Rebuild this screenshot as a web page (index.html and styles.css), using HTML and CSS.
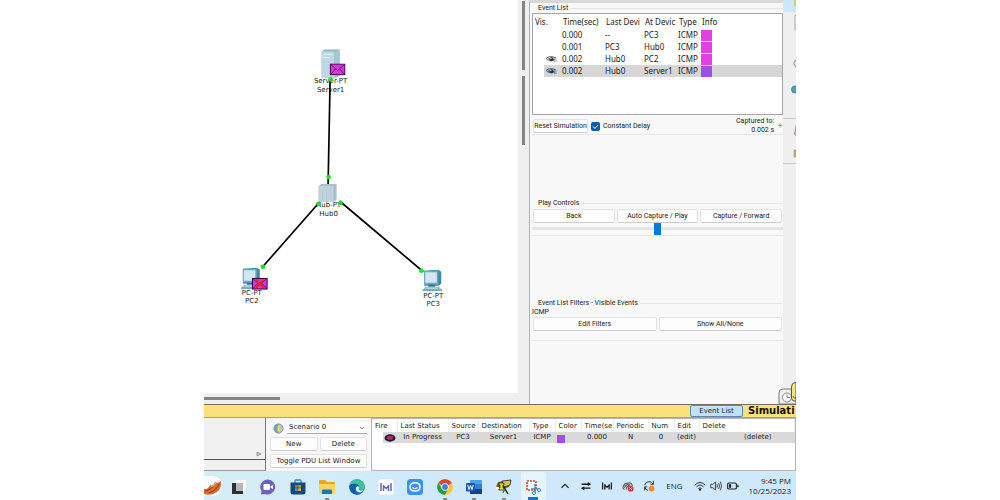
FILE: index.html
```html
<!DOCTYPE html>
<html lang="en">
<head>
<meta charset="utf-8">
<title>Packet Tracer - Simulation</title>
<link rel="stylesheet" href="styles.css">
</head>
<body>
<svg class="defs" aria-hidden="true">
  <defs>
    <symbol id="eye" viewBox="0 0 12 8">
      <path d="M1 3.5Q5 0 11 3" fill="none" stroke="#555" stroke-width="1"/>
      <path d="M1 4.5Q5 1 11 5Q6 8 1 4.5Z" fill="currentColor"/>
      <circle cx="6.5" cy="4.2" r="2" fill="#333"/><circle cx="5.8" cy="3.6" r=".7" fill="#eee"/>
      <path d="M9.500 3V7M11 3.500V7" stroke="currentColor" stroke-width=".8"/>
    </symbol>
    <symbol id="pc" viewBox="0 0 20 21">
      <path d="M2 1L16 0L19 2V14L16 16H2Z" fill="#3d8ba3"/>
      <path d="M2 1H16V15H2Z" fill="#6aa9bd"/>
      <path d="M3 2.500H14.500V13H3Z" fill="#d3e7f3"/>
      <path d="M6 15H13V17H6Z" fill="#2f6f86"/>
      <path d="M3 17H17L20 21H0Z" fill="#8fc0cf"/><path d="M0 20.5H20" stroke="#3b7c93" stroke-width="1"/>
      <path d="M4 18.5H15" stroke="#d9edf3" stroke-width=".7"/>
    </symbol>
    <symbol id="mail" viewBox="0 0 16 12">
      <path d="M.6 .6H15.4V11.4H.6Z" fill="#d936da" stroke="#330044" stroke-width="1.1"/>
      <path d="M1 1L8 7L15 1M1 11L6 5.5M15 11L10 5.5" fill="none" stroke="#4d0a5a" stroke-width=".8"/>
    </symbol>
    <symbol id="bars" viewBox="0 0 16 16">
      <path d="M3 4V12M13 4V12M5.5 6V12M10.500 6V12M5.500 7L8 9.500L10.500 7" fill="none" stroke="currentColor" stroke-width="1.5"/>
    </symbol>
  </defs>
</svg>
<main class="screen">
  <div class="workspace">
    <section class="stage">
      <svg class="topology" viewBox="0 0 315 393" role="img" aria-label="Network topology">
        <g class="device">
          <path d="M118 51L121 49H136V75L133 77H118Z" fill="#8fb6c4"/>
          <path d="M118 51H131V77H118Z" fill="#bcd9e3"/><path d="M131 51L136 49V75L131 77Z" fill="#a2c6d3"/>
          <path d="M120 54H129M120 57H126" stroke="#e6f4f9"/>
          <use href="#mail" x="126" y="63" width="16" height="12"/>
          <text x="127" y="83">Server-PT</text><text x="127" y="92">Server1</text>
        </g>
        <g class="device">
          <path d="M115 186L118 184H133V200L130 202H115Z" fill="#a5bfca"/><path d="M115 186H130V202H115Z" fill="#c0d3dc"/>
          <path d="M119 187V201M123 187V201M127 187V201" stroke="#b1c8d2" stroke-width=".7"/>
          <text x="125" y="207">Hub-PT</text><text x="125" y="216">Hub0</text>
        </g>
        <g class="device">
          <use href="#pc" x="37" y="268" width="20" height="21"/>
          <use href="#mail" x="48" y="278" width="16" height="12"/>
          <path d="M52 280L60 288M60 280L52 288" stroke="#f02020" stroke-width="2"/>
          <text x="48" y="295">PC-PT</text><text x="48" y="303">PC2</text>
        </g>
        <g class="device">
          <use href="#pc" x="219" y="270" width="20" height="21"/>
          <text x="230" y="298">PC-PT</text><text x="230" y="306">PC3</text>
        </g>
        <path class="link" d="M126.500 80L124.500 184M116 202L58 268M136 201L220 272"/>
        <g class="port"><circle cx="127" cy="79" r="2.300"/><circle cx="125" cy="177" r="2.300"/><circle cx="115" cy="204" r="2.300"/><circle cx="137" cy="203" r="2.300"/><circle cx="59" cy="267" r="2.300"/><circle cx="218" cy="271" r="2.300"/></g>
      </svg>
      <div class="vscroll"><span></span><span></span></div>
      <div class="hscroll"><span></span></div>
    </section>

    <aside class="panel">
      <section class="group events">
        <h2>Event List</h2>
        <div class="listbox">
          <table class="eventtable">
            <colgroup><col class="c-vis"><col class="c-time"><col class="c-last"><col class="c-at"><col class="c-type"><col></colgroup>
            <thead><tr><th>Vis.</th><th>Time(sec)</th><th>Last Devi</th><th>At Devic</th><th>Type</th><th>Info</th></tr></thead>
            <tbody>
              <tr><td></td><td>0.000</td><td>--</td><td>PC3</td><td>ICMP</td><td><i class="swatch"></i></td></tr>
              <tr><td></td><td>0.001</td><td>PC3</td><td>Hub0</td><td>ICMP</td><td><i class="swatch"></i></td></tr>
              <tr><td><svg class="eye"><use href="#eye"/></svg></td><td>0.002</td><td>Hub0</td><td>PC2</td><td>ICMP</td><td><i class="swatch"></i></td></tr>
              <tr class="selected"><td><svg class="eye blue"><use href="#eye"/></svg></td><td>0.002</td><td>Hub0</td><td>Server1</td><td>ICMP</td><td><i class="swatch violet"></i></td></tr>
            </tbody>
          </table>
        </div>
        <div class="capture">
          <button>Reset Simulation</button>
          <label><input type="checkbox" checked>Constant Delay</label>
          <p>Captured to:<br>0.002 s</p><span class="star">✳</span>
        </div>
      </section>
      <section class="group play">
        <h2>Play Controls</h2>
        <div class="buttons"><button>Back</button><button>Auto Capture / Play</button><button>Capture / Forward</button></div>
        <input class="speed" type="range" aria-label="Play speed" value="50">
      </section>
      <section class="group filters">
        <h2>Event List Filters - Visible Events</h2>
        <p>ICMP</p>
        <div class="buttons"><button>Edit Filters</button><button>Show All/None</button></div>
      </section>
    </aside>

    <nav class="rail">
      <svg viewBox="0 0 13 200" aria-hidden="true">
        <path d="M0 0H13V12H0Z" fill="#cce8ff"/><path d="M11 0H13V6H11Z" fill="#c2d66b"/>
        <path d="M13 15H12V30H13" fill="none" stroke="#aaa"/>
        <path d="M13 60Q9 63 13 67" fill="none" stroke="#999" stroke-width="1.200"/>
        <ellipse cx="12" cy="89.500" rx="3.500" ry="3.500" fill="#45a9ad" stroke="#27777b" stroke-width=".7"/>
        <path d="M0 118.500H13M0 163.500H13" stroke="#c8c8c8"/>
        <path d="M13 125L12 131L11 134L13 136M11 150H13V157H11Z" fill="#c9b184" stroke="#a58c5c" stroke-width=".6"/>
      </svg>
    </nav>
    <button class="modetab" aria-label="Simulation mode">
      <svg viewBox="0 0 18 22"><path d="M1 22V11Q1 7 5 7H18V22Z" fill="#f0f0f0" stroke="#777"/><circle cx="9" cy="15.500" r="4.500" fill="#fafafa" stroke="#888"/><path d="M9 12.500V15.500H12" fill="none" stroke="#888"/><path d="M13.500 16V5Q13.500 1 17 .5H18V19H16Q14 19 13.500 16Z" fill="#f8e27a" stroke="#555"/><path d="M15 14Q16 17 18 16" fill="none" stroke="#555"/></svg>
    </button>
  </div>

  <div class="modebar"><button>Event List</button><strong>Simulati</strong></div>

  <div class="pdus">
    <div class="tray-left"><div><svg viewBox="0 0 6 6"><path d="M1 1L5 3L1 5Z" fill="#ccc" stroke="#888" stroke-width=".8"/></svg></div><div></div></div>
    <div class="scenario">
      <div class="pick">
        <svg viewBox="0 0 12 12"><circle cx="6" cy="6" r="5" fill="#b9c4c8" stroke="#7f8d92"/><path d="M6 1A5 5 0 0 0 6 11Z" fill="#7b9fb4"/><path d="M5 3H7V4.200H5ZM5 5H7V9H5Z" fill="#f7ef65"/></svg>
        <select aria-label="Scenario"><option>Scenario 0</option></select>
      </div>
      <div class="buttons"><button>New</button><button>Delete</button></div>
      <button>Toggle PDU List Window</button>
    </div>
    <div class="pdubox">
      <table class="pdutable">
        <colgroup><col class="w25"><col class="w51"><col class="w30"><col class="w51"><col class="w26"><col class="w26"><col class="w32"><col class="w35"><col class="w26"><col class="w25"><col></colgroup>
        <thead><tr><th>Fire</th><th>Last Status</th><th>Source</th><th>Destination</th><th>Type</th><th>Color</th><th>Time(se</th><th>Periodic</th><th>Num</th><th>Edit</th><th>Delete</th></tr></thead>
        <tbody><tr><td><svg class="fire" viewBox="0 0 12 8"><ellipse cx="6" cy="4" rx="5.500" ry="3.700" fill="#1b1b35"/><ellipse cx="6" cy="3.800" rx="3.300" ry="2" fill="#b02a62"/></svg></td><td>In Progress</td><td>PC3</td><td>Server1</td><td>ICMP</td><td><i class="swatch violet small"></i></td><td>0.000</td><td>N</td><td>0</td><td>(edit)</td><td>(delete)</td></tr></tbody>
      </table>
    </div>
  </div>

  <footer class="taskbar">
    <svg class="canyon" viewBox="0 0 18 20"><path d="M0 0H10Q18 2 18 10Q18 19 9 20H0Z" fill="#f6fbfe"/><path d="M0 13Q4 14 6 9Q9 11 11 6Q14 8 17 5Q18 12 13 16Q7 20 0 18Z" fill="#dc6a2f"/><path d="M1 15Q7 14 9 10M5 17Q12 15 15 8" fill="none" stroke="#8d3518"/><path d="M7 11Q10 10 12 7" stroke="#f5ab72" fill="none"/></svg>
    <div class="apps">
      <span><svg viewBox="0 0 16 16"><path d="M5 1H15V12H5Z" fill="#f8f8f8"/><path d="M1 4H12V15H1Z" fill="#303030"/><path d="M5 4H12V12H5Z" fill="#b6b9bb"/></svg></span>
      <span><svg viewBox="0 0 16 16"><path d="M8 .5A7.500 7.500 0 1 1 5 15L1 15.500L1.500 12A7.500 7.500 0 0 1 8 .5Z" fill="#6c5fc0"/><rect x="3.500" y="5" width="6.500" height="6" rx="1.300" fill="#fff"/><path d="M10.500 7.500L13 5.800V10.200L10.500 8.600Z" fill="#fff"/></svg></span>
      <span><svg viewBox="0 0 16 16"><path d="M5 4V2Q5 1 6 1H10Q11 1 11 2V4" fill="none" stroke="#2b8bd0" stroke-width="1.300"/><path d="M.5 3.500H15.500V13Q15.500 15.500 13 15.500H3Q.5 15.500 .5 13Z" fill="#17477e"/><path d="M5 6H7.700V8.700H5Z" fill="#f05a30"/><path d="M8.300 6H11V8.700H8.300Z" fill="#7fba25"/><path d="M5 9.300H7.700V12H5Z" fill="#28a8ea"/><path d="M8.300 9.300H11V12H8.300Z" fill="#fdb813"/></svg></span>
      <span class="open"><svg viewBox="0 0 16 16"><path d="M0 2Q0 1 1 1H6L8 3H15Q16 3 16 4V14H0Z" fill="#e9a820"/><path d="M0 5H16V14Q16 15 15 15H1Q0 15 0 14Z" fill="#fcd462"/><path d="M3 15V11.500Q3 10.500 4 10.500H12Q13 10.500 13 11.500V15Z" fill="#1e75bd"/></svg></span>
      <span><svg viewBox="0 0 16 16"><circle cx="8" cy="8" r="7.800" fill="#1b78c8"/><path d="M1 5A7.800 7.800 0 0 1 15.800 8Q15.500 11 12 11Q9.500 11 10 9Q10 5.500 6 5Q3 4.500 .5 7Z" fill="#37c5a0"/><path d="M.3 8Q1 4.500 5.500 4.800Q10 5 10 8.500Q6 7 6 10.500Q6.500 14.500 11 15A7.800 7.800 0 0 1 .3 8Z" fill="#145da8"/><path d="M7 8Q9.500 6.500 10 8.500Q9 11 12 11.500Q14 11.500 15 10.500Q13 14 9.500 13Q6 11.500 7 8Z" fill="#dff3f8"/></svg></span>
      <span><svg class="indigo" viewBox="0 0 16 16"><rect x=".5" y=".5" width="15" height="15" rx="2" fill="#fff"/><use href="#bars" width="16" height="16"/></svg></span>
      <span><svg viewBox="0 0 16 16"><rect width="16" height="16" rx="3.500" fill="#3990f5"/><path d="M8 3.800C12 3.800 13 6 13 8S11.500 12 8 12S3 10 3 8S4 3.800 8 3.800Z" fill="none" stroke="#fff" stroke-width="1.500"/><path d="M5.500 8.500Q8 10.500 10.500 8.500" fill="none" stroke="#fff" stroke-width="1.200"/></svg></span>
      <span class="open"><svg viewBox="0 0 16 16"><circle cx="8" cy="8" r="7.800" fill="#fac72e"/><path d="M8 8L1.250 4.100A7.800 7.800 0 0 1 14.750 4.100Z" fill="#df4132"/><path d="M1.250 4.100A7.800 7.800 0 0 0 8 15.800L11.200 9.500L5 9.500Z" fill="#269b4c"/><circle cx="8" cy="8" r="3.700" fill="#fff"/><circle cx="8" cy="8" r="2.900" fill="#3e7fe8"/></svg></span>
      <span class="open"><svg viewBox="0 0 16 16"><rect x="4" y="1" width="12" height="14" rx="1" fill="#2d83d3"/><path d="M4 1H15Q16 1 16 2V5H4Z" fill="#45a5ed"/><path d="M4 10H16V14Q16 15 15 15H4Z" fill="#173f86"/><rect y="4" width="9" height="8.500" rx="1" fill="#1d59ae"/><path d="M1.700 6L3 10.500L4.500 6.500L6 10.500L7.300 6" fill="none" stroke="#fff" stroke-width="1"/></svg></span>
      <span class="open"><svg viewBox="0 0 16 16"><path d="M2 3L15 1L13 8L4 11L0 8Z" fill="#746124"/><path d="M6 2L15 1L14 6L8 8Z" fill="#d6c63d" stroke="#222" stroke-width=".8"/><path d="M3 4H8V6H7V9H8V11H3V9H4V6H3Z" fill="#eee32e" stroke="#171717" stroke-width=".7"/><path d="M8 8L12 15" stroke="#1c2318" stroke-width="1.500"/><path d="M9 10L7 14" stroke="#4c7a3a" stroke-width="1.200"/><path d="M0 8H3V10H0Z" fill="#fff"/></svg></span>
      <span class="active"><svg viewBox="0 0 16 16"><path d="M2 2H11V11H2Z" fill="#faf4f4" stroke="#d2452f" stroke-width="1.600" stroke-dasharray="2 1"/><path d="M10 5V13M6 10H13" stroke="#3f91bd" stroke-width="1.400"/><circle cx="9" cy="14" r="1.500" fill="none" stroke="#2d86c2"/><circle cx="14" cy="11" r="1.500" fill="none" stroke="#2d86c2"/></svg></span>
    </div>
    <div class="tray">
      <svg viewBox="0 0 16 16"><path d="M4 10L8 6L12 10" fill="none" stroke="#222" stroke-width="1.300"/></svg>
      <svg viewBox="0 0 16 16"><path d="M3 6H13M3 10.500H13" stroke="#111" stroke-width="1.500"/><path d="M10 3.500L13.500 6L10 8ZM6 8.500L2.500 10.500L6 13Z" fill="#111"/></svg>
      <svg viewBox="0 0 16 16"><use href="#bars" width="16" height="16"/></svg>
      <svg viewBox="0 0 16 16"><path d="M4 12Q1 11 3 8Q4 4 8 5Q12 3 13 8M4 10Q6 5 11 7M6 12Q6 8 10 8" fill="none" stroke="#555" stroke-width="1.200"/><circle cx="11" cy="11" r="3.300" fill="#d6303a"/><path d="M9.700 9.700L12.300 12.300M12.300 9.700L9.700 12.300" stroke="#fff" stroke-width=".9"/></svg>
      <svg viewBox="0 0 16 16"><path d="M3 7Q4 3 8 3Q11 3 13 6M13 2V6H9.500M3 9Q4 13 7 13M3 13V9H6" fill="none" stroke="#333" stroke-width="1.100"/><circle cx="11" cy="11" r="3.200" fill="#f18a1f"/></svg>
      <span class="lang">ENG</span>
      <svg viewBox="0 0 16 16"><path d="M2 7Q8 1 14 7M4 9Q8 5 12 9M6 11Q8 9 10 11" fill="none" stroke="#222" stroke-width="1.100"/><circle cx="8" cy="12.300" r="1.100"/></svg>
      <svg viewBox="0 0 16 16"><path d="M2 6H4.500L7.500 3.500V12.500L4.500 10H2ZM9 6Q10.500 8 9 10M11 4.500Q13 8 11 11.500M13 3Q15.500 8 13 13" fill="none" stroke="#333" stroke-width="1"/></svg>
      <svg viewBox="0 0 16 16"><rect x="3" y="4.500" width="10" height="7" rx="1.500" fill="none" stroke="#222" stroke-width="1.200"/><path d="M4.500 6H7V10H4.500ZM14 6.500H15.500V9.500H14Z" fill="#222"/></svg>
      <p>9:45 PM<br>10/25/2023</p>
    </div>
  </footer>
</main>
</body>
</html>
```
FILE: styles.css
```css
* { box-sizing: border-box; }
body { margin: 0; background: #fff; color: #222; font: 7px/9px "DejaVu Sans", sans-serif; }
h2, p { margin: 0; font-size: inherit; font-weight: normal; }
button { margin: 0; padding: 0 2px; border: 1px solid #e2e2e2; border-bottom-color: #ccc; border-radius: 2px; background: #fdfdfd; color: inherit; font: inherit; white-space: nowrap; }
table { width: 100%; border-collapse: collapse; table-layout: fixed; }
th, td { padding: 0; font-weight: normal; text-align: left; white-space: nowrap; overflow: hidden; }
.defs { display: block; width: 0; height: 0; }

.screen { display: flex; flex-direction: column; min-height: 100vh; margin: 0 204px; background: #f0f0f0; overflow: hidden; }
.workspace { position: relative; flex: 1; display: grid; grid-template-columns: 1fr 254px 13px; }
.stage { display: grid; grid-template-columns: 1fr 11px; grid-template-rows: 1fr 11px; background: #efefef; }
.topology { display: block; width: 100%; height: 100%; background: #fff; }
.device text { text-anchor: middle; fill: #222; }
.link { fill: none; stroke: #000; stroke-width: 1.7; }
.port { fill: #16e424; }
.vscroll { display: flex; flex-direction: column; align-items: center; gap: 6px; padding-top: 1px; }
.vscroll span { width: 3px; height: 69px; background: #858585; }
.hscroll { padding-top: 4px; }
.hscroll span { display: block; width: 76px; height: 3px; background: #858585; }

.panel { display: flex; flex-direction: column; padding: 1px 0 0 2px; border-left: 1px solid #aab0b8; border-top: 3px solid #d8d8d8; background: #f8f8f8; font: 7px/9px Roboto, sans-serif; }
.group { border-bottom: 1px solid #e7e7e7; }
.group h2 { display: flex; align-items: center; gap: 2px; padding-left: 6px; }
.group h2::after { content: ""; flex: 1; height: 1px; background: #e5e5e5; }
.listbox { height: 102px; border: 1px solid #a5a5a5; background: #fff; }
.eventtable { font: 8px/12px "Noto Sans", sans-serif; }
.eventtable th { height: 15px; padding: 0 0 0 2px; }
.eventtable th:nth-child(n+2) { padding-left: 1px; }
.c-vis { width: 29px; }
.c-time { width: 43px; }
.c-last { width: 39px; }
.c-at { width: 34px; }
.c-type { width: 23px; }
.selected { background: linear-gradient(to right, transparent 11px, #d6d6d6 11px); }
.swatch { display: block; width: 11px; height: 11px; background: #e23fe4; }
.swatch.violet { background: #9e50e0; }
.swatch.small { width: 8px; height: 8px; margin: 2px 0 0 2px; }
.eye { display: block; width: 12px; height: 8px; margin-left: 12px; color: #999; }
.eye.blue { color: #3f8cc0; }
.capture { display: flex; align-items: center; gap: 3px; height: 19px; padding-top: 3px; }
.capture button { width: 55px; height: 14px; margin-left: 1px; padding: 0; }
.capture label { display: flex; align-items: center; gap: 3px; }
.capture input { appearance: none; width: 9px; height: 9px; margin: 0; border-radius: 2px; background: #0b5cad url("data:image/svg+xml,%3Csvg xmlns='http://www.w3.org/2000/svg' viewBox='0 0 9 9'%3E%3Cpath d='M2 4.500L4 6.500L7 3' fill='none' stroke='white'/%3E%3C/svg%3E"); }
.capture p { margin-left: auto; text-align: right; }
.star { color: #888; font: 7px/8px "DejaVu Sans", sans-serif; }
.buttons { display: flex; gap: 2px; }
.buttons button { flex: 1; }
.play { margin-top: 64px; }
.play .buttons, .filters .buttons { padding: 0 1px; }
.play .buttons button { height: 14px; margin-top: 1px; }
.speed { appearance: none; display: block; width: 100%; height: 12px; margin: 0; background: linear-gradient(transparent 4px, #e5e5e5 4px 7px, transparent 7px); }
.speed::-webkit-slider-thumb { appearance: none; width: 7px; height: 12px; background: #0a78d7; }
.filters { margin-top: 63px; height: 42px; }
.filters button { height: 14px; }
.rail { background: #efefef; }
.rail svg { display: block; width: 13px; height: 200px; }
.modetab { position: absolute; right: 0; bottom: 0; width: 18px; height: 22px; padding: 0; border: 0; background: none; }
.modetab svg { display: block; width: 18px; height: 22px; }

.modebar { display: flex; justify-content: flex-end; gap: 5px; height: 14px; border-top: 1px solid #77715c; border-bottom: 1px solid #a9a27c; background: #f9e17d; }
.modebar button { width: 53px; height: 12px; border: 1px solid #5e87ab; background: #c2e2fb; line-height: 10px; }
.modebar strong { width: 48px; color: #111; font-size: 10px; line-height: 12px; }

.pdus { display: grid; grid-template-columns: 62px 105px 1fr; height: 53px; }
.tray-left { display: grid; grid-template-rows: 1fr 10px; border-right: 1px solid #777; border-bottom: 1px solid #999; }
.tray-left div:first-child { display: flex; align-items: flex-end; justify-content: flex-end; padding: 0 3px 2px; border-bottom: 1px solid #555; }
.tray-left svg { width: 6px; height: 6px; }
.scenario { display: flex; flex-direction: column; gap: 3px; padding: 4px 4px 1px; background: #f7f7f7; }
.scenario button { height: 14px; }
.pick { display: flex; align-items: center; gap: 3px; padding-left: 3px; }
.pick svg { width: 11px; height: 11px; }
.pick select { appearance: none; flex: 1; height: 12px; padding: 0 2px; border: 0; border-bottom: 1px solid #aaa; background: #fdfdfd url("data:image/svg+xml,%3Csvg xmlns='http://www.w3.org/2000/svg' viewBox='0 0 6 6'%3E%3Cpath d='M1 2L3 4L5 2' fill='none' stroke='%23666' stroke-width='.8'/%3E%3C/svg%3E") no-repeat right 2px center / 6px 6px; color: inherit; font: inherit; }
.pdubox { border: 1px solid #b5b5b5; background: #fff; overflow: hidden; }
.pdutable th { height: 13px; padding: 1px 0 0 3px; border-right: 1px solid #ececec; }
.pdutable td { height: 11px; background: #d9d9d9; text-align: center; }
.pdutable td:first-child { background: linear-gradient(to right, #fff 11px, #d9d9d9 11px); }
.pdutable td:last-child { padding-left: 22px; }
.fire { display: block; width: 12px; height: 8px; margin-left: 12px; }
.w25 { width: 25px; }
.w26 { width: 26px; }
.w30 { width: 30px; }
.w32 { width: 32px; }
.w35 { width: 35px; }
.w51 { width: 51px; }

.taskbar { display: flex; align-items: center; height: 29px; padding-top: 1px; background: linear-gradient(to right, #d5eef4, #cfe9fb 40%, #cfe8fc); font: 8px/10px "Open Sans", sans-serif; }
.canyon { width: 18px; height: 20px; margin-right: 2px; }
.apps { display: grid; grid-template-columns: repeat(11, 1fr); width: 324px; height: 28px; }
.apps span { display: flex; align-items: center; justify-content: center; padding-top: 2px; }
.apps svg { width: 16px; height: 16px; }
.apps .indigo { color: #6268b0; }
.apps .open { background: linear-gradient(#888, #888) no-repeat center bottom / 4px 2px; }
.apps .active { margin: 0 2px; border-radius: 2px; background: linear-gradient(#0a78d7, #0a78d7) no-repeat center bottom / 10px 3px, #e5f3fc; }
.tray { flex: 1; display: flex; align-items: center; justify-content: flex-end; gap: 5px; padding-right: 5px; }
.tray svg { width: 16px; height: 14px; }
.tray .lang { margin: 0 4px; }
.tray svg ~ span ~ svg { margin-right: -5px; }
.tray p { margin-left: 9px; text-align: right; }
```
